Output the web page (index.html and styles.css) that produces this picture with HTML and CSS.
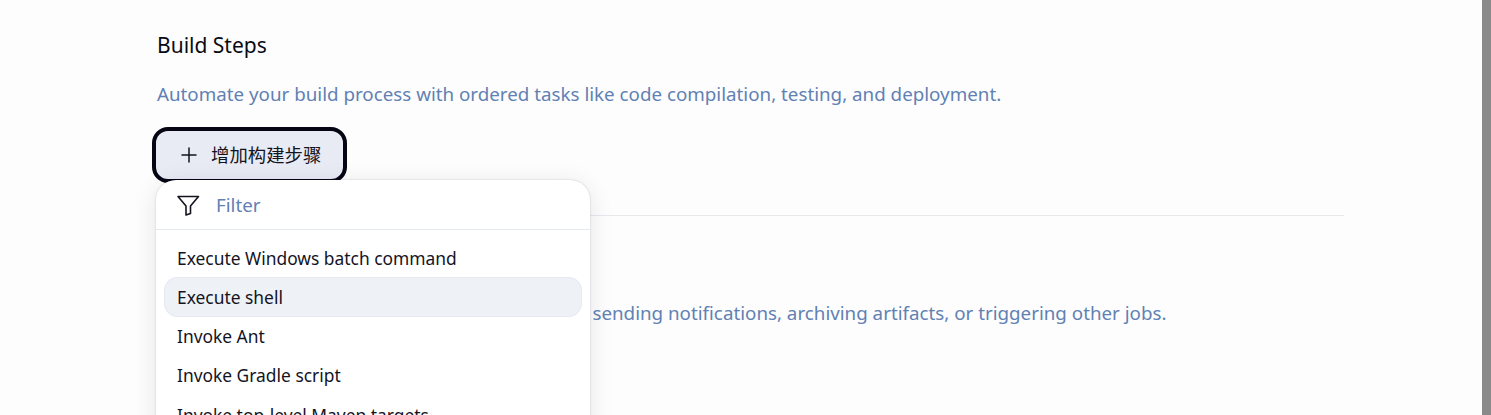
FILE: index.html
```html
<!DOCTYPE html>
<html lang="en">
<head>
<meta charset="utf-8">
<title>Build Steps</title>
<link rel="stylesheet" href="styles.css">
</head>
<body>
<div class="page">
  <main class="content">
    <section class="section first">
      <h2 class="title">Build Steps</h2>
      <p class="desc">Automate your build process with ordered tasks like code compilation, testing, and deployment.</p>
      <div class="add-wrap">
        <button class="add-btn" type="button">
          <svg class="plus" width="16" height="16" viewBox="0 0 16 16" fill="none" stroke="#14141f" stroke-width="1.5" stroke-linecap="round"><path d="M8 1v14M1 8h14"/></svg>
          <span class="add-label">增加构建步骤</span>
        </button>
        <div class="menu">
          <div class="filter">
            <svg class="funnel" width="24" height="24" viewBox="0 0 24 24" fill="none" stroke="#14141f" stroke-width="1.6" stroke-linejoin="round"><path d="M2 3.500h20.500l-8 9.500v7.500l-4.500 1.500v-9z"/></svg>
            <span class="filter-text">Filter</span>
          </div>
          <ul class="items">
            <li class="item">Execute Windows batch command</li>
            <li class="item active">Execute shell</li>
            <li class="item">Invoke Ant</li>
            <li class="item">Invoke Gradle script</li>
            <li class="item">Invoke top-level Maven targets</li>
          </ul>
        </div>
      </div>
    </section>
    <hr class="rule">
    <section class="section second">
      <h2 class="title">Post-build Actions</h2>
      <p class="desc">Define what happens after the build finishes, like sending notifications, archiving artifacts, or triggering other jobs.</p>
    </section>
  </main>
  <div class="scrollbar"></div>
</div>
</body>
</html>
```
FILE: styles.css
```css
* { box-sizing: border-box; }
html, body { margin: 0; height: 100%; overflow: hidden; background: #fff; }
body { font-family: "Noto Sans", "Noto Sans CJK SC", sans-serif; color: #14141f; }
.page { display: flex; height: 415px; overflow: hidden; background: #fdfdfd; }
.content { flex: 1; padding: 0 138px 0 157px; min-width: 0; }
.scrollbar { width: 9px; background: #8a8a8a; flex: none; }
.section.first { padding-top: 32px; }
.title { margin: 0; font-size: 21px; line-height: 27px; font-weight: 400; color: #0a0a14; }
.desc { margin: 23px 0 0; font-size: 18.77px; line-height: 24px; color: #6181b3; white-space: nowrap; }
.add-wrap { position: relative; margin-top: 21px; height: 88px; padding-top: 3px; }
.add-btn { display: flex; align-items: center; gap: 14px; height: 56px; margin: -3px 0 0 -5px; width: 195px; padding: 0 0 0 25px; border: 4px solid #050514; border-radius: 16px; background: #e8ebf4; font: inherit; font-size: 18.4px; color: #14141f; }
.add-label { padding-bottom: 2px; }
.menu { position: absolute; left: -1px; top: 53px; width: 434px; height: 400px; background: #fff; border-radius: 20px; box-shadow: 0 0 2px rgba(20,20,50,.2), 0 4px 24px rgba(20,20,50,.1); }
.filter { display: flex; align-items: center; gap: 16px; height: 50px; padding: 0 20px; border-bottom: 1px solid #e4e9f0; }
.filter-text { font-size: 18.75px; color: #6181b3; }
.items { list-style: none; margin: 0; padding: 7.5px 8px; }
.item { height: 40px; display: flex; align-items: center; padding: 0 13px; font-size: 17.4px; color: #14141f; border-radius: 14px; margin-bottom: -0.7px; }
.item.active { background: #eef1f6; box-shadow: inset 0 0 0 1px #e6eaf2; }
.rule { margin: 0; border: 0; border-top: 1px solid #e8e8ec; }
.section.second { padding-top: 34px; }
.section.second .desc { margin-top: 24px; }
```
